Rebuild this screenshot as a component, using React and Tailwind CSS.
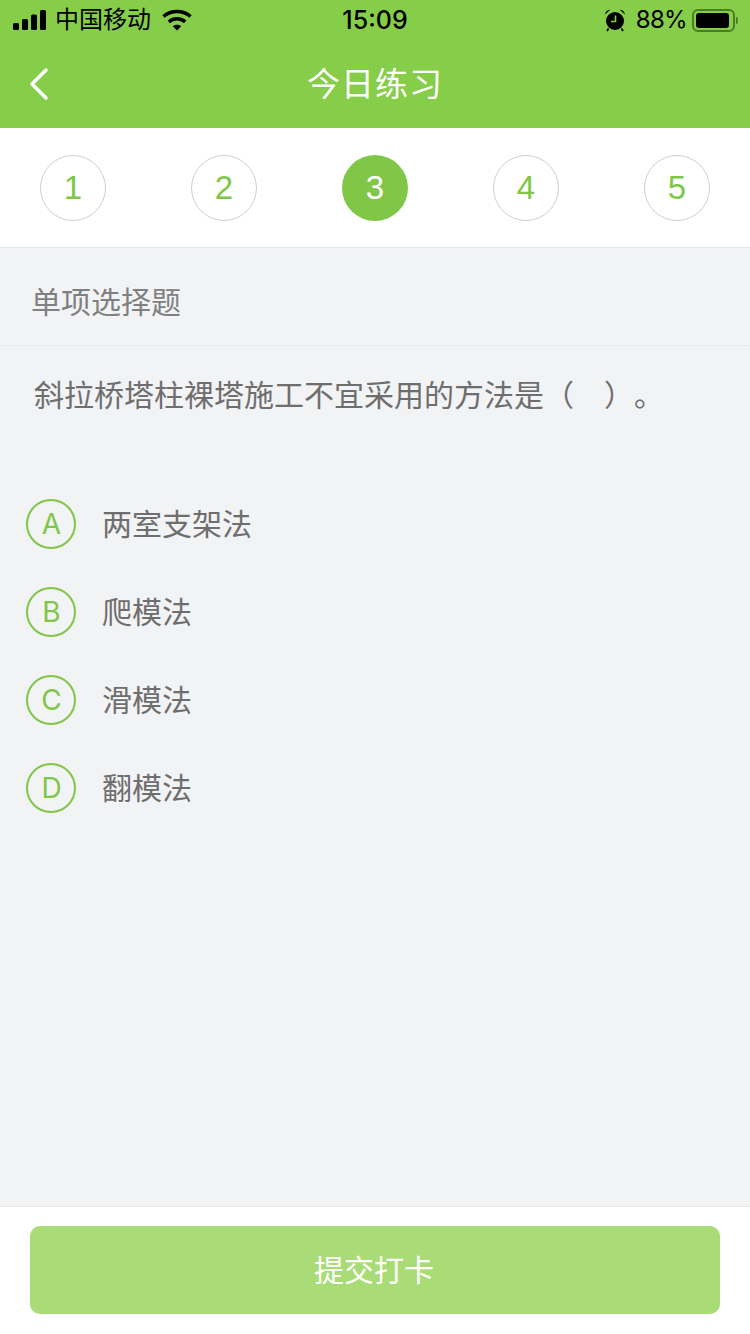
import React from "react";

const steps = [1, 2, 3, 4, 5];
const options = [
  { key: "A", label: "两室支架法" },
  { key: "B", label: "爬模法" },
  { key: "C", label: "滑模法" },
  { key: "D", label: "翻模法" },
];

const sans = "font-['Inter','Noto_Sans_CJK_SC',sans-serif]";

const Signal = () => (
  <svg width="34" height="20" viewBox="0 0 34 20" fill="#000">
    <rect x="0" y="13" width="6" height="7" rx="1.5" />
    <rect x="9" y="9" width="6" height="11" rx="1.5" />
    <rect x="18" y="4.5" width="6" height="15.5" rx="1.5" />
    <rect x="27" y="0" width="6" height="20" rx="1.5" />
  </svg>
);

const Wifi = () => (
  <svg width="30" height="22" viewBox="0 0 30 22" fill="none" stroke="#000" strokeWidth="3.6">
    <path d="M1.5 7.5C9 .8 21 .8 28.500 7.500" />
    <path d="M6.800 12.800C11.500 8.800 18.500 8.800 23.200 12.800" />
    <path d="M15 21.500L10.800 17.200C13.200 15.200 16.800 15.200 19.200 17.200Z" fill="#000" stroke="none" />
  </svg>
);

const Alarm = () => (
  <svg width="22" height="24" viewBox="0 0 22 24">
    <circle cx="11" cy="13" r="9" fill="#000" />
    <path d="M1 6.500C1.500 3.500 3.500 1.800 6.300 1.800ZM21 6.500C20.500 3.500 18.500 1.800 15.700 1.800Z" fill="#000" />
    <path d="M4.500 20.500L3 23M17.500 20.500L19 23" stroke="#000" strokeWidth="1.800" />
    <path d="M11.500 7.500V13.500H7" fill="none" stroke="#86cd4a" strokeWidth="1.600" />
  </svg>
);

const Battery = () => (
  <div className="flex items-center">
    <div className="h-[23px] w-[43px] rounded-[6px] border-2 border-[#4b7d27] p-[2px]">
      <div className="h-full w-[33px] rounded-[3px] bg-black" />
    </div>
    <div className="ml-[1px] h-[7px] w-[2px] rounded-r-full bg-[#4b7d27]" />
  </div>
);

const StatusBar = () => (
  <div className="relative flex h-[40px] items-center justify-between pl-[13px] pr-[12px] text-black">
    <div className="flex items-center">
      <Signal />
      <span className="ml-[8px] text-[24px] leading-none">中国移动</span>
      <span className="ml-[11px]"><Wifi /></span>
    </div>
    <span className="absolute left-0 right-0 text-center text-[25px] font-medium leading-none">15:09</span>
    <div className="flex items-center">
      <Alarm />
      <span className="ml-[10px] mr-[5px] text-[24px] leading-none tracking-[-0.7px]">88%</span>
      <Battery />
    </div>
  </div>
);

const NavBar = () => (
  <div className="relative flex h-[88px] items-center justify-center">
    <svg className="absolute left-[28px] top-[27px]" width="22" height="34" viewBox="0 0 22 34" fill="none" stroke="#fff" strokeWidth="3.500" strokeLinecap="round" strokeLinejoin="round">
      <path d="M18 3L4 17L18 31" />
    </svg>
    <h1 className="text-[33px] font-normal leading-none tracking-[1px] text-white">今日练习</h1>
  </div>
);

const App = () => {
  return (
    <div className={`${sans} flex h-[1334px] w-[750px] flex-col bg-[#f2f3f5]`}>
      <header className="bg-[#86cd4a]">
        <StatusBar />
        <NavBar />
      </header>

      {/* question tabs */}
      <div className="flex h-[120px] items-center justify-between border-b border-[#e6e6e6] bg-white px-[40px]">
        {steps.map((n) => (
          <div
            key={n}
            className={
              n === 3
                ? "flex h-[66px] w-[66px] items-center justify-center rounded-full bg-[#80c647] pt-[1px] font-['Liberation_Sans',sans-serif] text-[33px] text-white"
                : "flex h-[66px] w-[66px] items-center justify-center rounded-full border border-[#cfcfcf] pt-[1px] font-['Liberation_Sans',sans-serif] text-[33px] text-[#80c647]"
            }
          >
            {n}
          </div>
        ))}
      </div>

      <div className="flex h-[98px] items-center border-b border-[#e8e9eb] pl-[31px] pt-[12px] text-[30px] text-[#808080]">
        单项选择题
      </div>

      <main className="flex-1">
        <p className="pl-[34px] pt-[29px] text-[30px] leading-[40px] text-[#6e6e6e] [text-spacing-trim:space-all]">斜拉桥塔柱裸塔施工不宜采用的方法是（　）。</p>
        <ul className="mt-[84px] flex flex-col gap-[38px] pl-[26px]">
          {options.map((opt) => (
            <li key={opt.key} className="flex items-center">
              <span className="flex h-[50px] w-[50px] items-center justify-center rounded-full border-2 border-[#80c647] pl-[1px] text-[28px] text-[#80c647]">
                {opt.key}
              </span>
              <span className="ml-[26px] text-[30px] text-[#6e6e6e]">{opt.label}</span>
            </li>
          ))}
        </ul>
      </main>

      <footer className="h-[128px] border-t border-[#e8e8e8] bg-white px-[30px] pt-[19px]">
        <button className="flex h-[88px] w-full items-center justify-center rounded-[10px] bg-[#a9dc77] pr-[2px] text-[30px] text-white">
          提交打卡
        </button>
      </footer>
    </div>
  );
};

export default App;
